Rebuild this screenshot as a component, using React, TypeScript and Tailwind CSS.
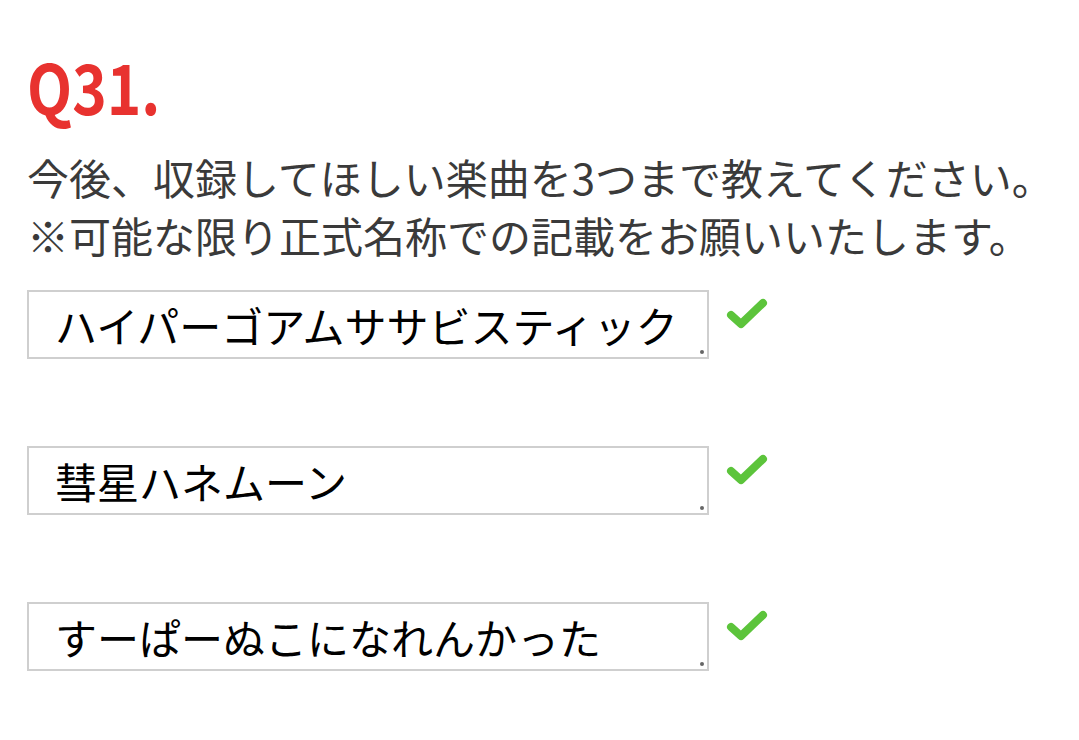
import React from 'react';

const answers = ['ハイパーゴアムササビスティック', '彗星ハネムーン', 'すーぱーぬこになれんかった'];

const Check: React.FC = () => (
    <svg width="42" height="34" viewBox="0 0 42 34" className="shrink-0 mt-[6px] ml-[17px]">
        <path d="M5 19 L15 28 L37 7" fill="none" stroke="#5cc43b" strokeWidth="8" strokeLinecap="round" strokeLinejoin="round" />
    </svg>
);

const AnswerBox: React.FC<{ value: string }> = ({ value }) => (
    <div className="flex items-start">
        <div className="relative w-[682px] h-[69px] border-2 border-[#cfcfcf] bg-white flex items-center pl-[26px] text-[42px] text-black leading-none whitespace-nowrap">
            {value}
            <span className="absolute right-[3px] bottom-[3px] w-[4px] h-[4px] rounded-full bg-[#666]" />
        </div>
        <Check />
    </div>
);

export default function App() {
    return (
        <div className="w-[1079px] h-[740px] bg-white pl-[27px] pt-[50px] overflow-hidden" style={{ fontFamily: '"Noto Sans CJK JP", sans-serif' }}>
            <div className="text-[69px] font-bold text-[#e8322f] leading-[70px] origin-left scale-x-[0.85]">
                Q31.
            </div>
            <div className="mt-[28px] text-[42px] text-[#3a3a3a] leading-[58px]">
                <p>今後、収録してほしい楽曲を3つまで教えてください。</p>
                <p>※可能な限り正式名称での記載をお願いいたします。</p>
            </div>
            <div className="mt-[26px] flex flex-col gap-[87px]">
                {answers.map((a) => (
                    <AnswerBox key={a} value={a} />
                ))}
            </div>
        </div>
    );
}
